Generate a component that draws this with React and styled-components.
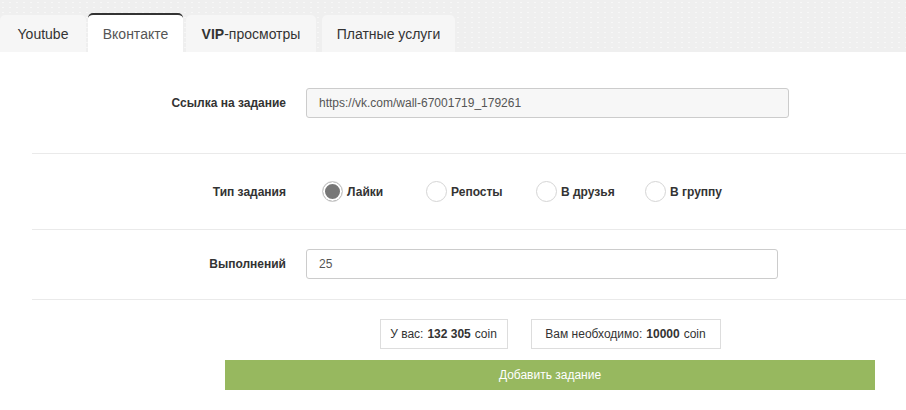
import React from 'react';
import styled, { createGlobalStyle } from 'styled-components';

const GlobalStyle = createGlobalStyle`
  body {
    margin: 0;
    background: #fff;
    font-family: 'Liberation Sans', Arial, sans-serif;
    color: #333;
  }
`;

const tabs = [
  { id: 'yt', label: 'Youtube', width: 86, gap: 2 },
  { id: 'vk', label: 'Вконтакте', width: 95, gap: 3, active: true },
  { id: 'vip', label: 'VIP', rest: '-просмотры', width: 130, gap: 6 },
  { id: 'paid', label: 'Платные услуги', width: 133, gap: 0 },
];

const types = [
  { label: 'Лайки', width: 104, checked: true },
  { label: 'Репосты', width: 110 },
  { label: 'В друзья', width: 109 },
  { label: 'В группу' },
];

export default function App() {
  return (
    <Page>
      <GlobalStyle />
      <TabBar>
        {tabs.map((t) => (
          <Tab key={t.id} $active={t.active} $width={t.width} $gap={t.gap}>
            {t.rest ? (
              <>
                <b>{t.label}</b>
                {t.rest}
              </>
            ) : (
              t.label
            )}
          </Tab>
        ))}
      </TabBar>

      <Form>
        <Row $top={36} $bottom={35}>
          <Label>Ссылка на задание</Label>
          <Input $width={483} $muted readOnly value="https://vk.com/wall-67001719_179261" />
        </Row>
        <Divider />
        <Row $top={27} $bottom={27}>
          <Label>Тип задания</Label>
          <RadioGroup>
            {types.map((r) => (
              <RadioOption key={r.label} $width={r.width}>
                <RadioCircle $checked={r.checked} />
                {r.label}
              </RadioOption>
            ))}
          </RadioGroup>
        </Row>
        <Divider />
        <Row $top={19} $bottom={20}>
          <Label>Выполнений</Label>
          <Input $width={472} readOnly value="25" />
        </Row>
        <Divider />
        <Footer>
          <Balance>
            <InfoBox $width={128}>
              У вас: <b>132 305</b> coin
            </InfoBox>
            <InfoBox $width={190}>
              Вам необходимо: <b>10000</b> coin
            </InfoBox>
          </Balance>
          <SubmitButton>Добавить задание</SubmitButton>
        </Footer>
      </Form>
    </Page>
  );
}

const Page = styled.div`
  width: 906px;
  min-height: 410px;
  background: #fff;
`;

const TabBar = styled.div`
  display: flex;
  align-items: flex-end;
  height: 52px;
  background: #efefef;
  background-image: radial-gradient(rgba(255, 255, 255, 0.5) 1px, transparent 1px);
  background-size: 7px 5px;
`;

const Tab = styled.div`
  display: flex;
  align-items: center;
  justify-content: center;
  box-sizing: border-box;
  width: ${(p) => p.$width}px;
  height: ${(p) => (p.$active ? '39px' : '37px')};
  padding-top: 1px;
  margin-right: ${(p) => p.$gap}px;
  font-size: 14px;
  color: ${(p) => (p.$active ? '#555' : '#333')};
  background: ${(p) => (p.$active ? '#fff' : '#f6f6f6')};
  border-top: ${(p) => (p.$active ? '2px solid #333' : 'none')};
  border-radius: 5px 5px 0 0;

  b {
    font-weight: bold;
  }
`;

const Form = styled.div`
  display: flex;
  flex-direction: column;
`;

const Row = styled.div`
  display: grid;
  grid-template-columns: 286px 1fr;
  column-gap: 20px;
  align-items: center;
  padding: ${(p) => p.$top}px 0 ${(p) => p.$bottom}px;
`;

const Label = styled.div`
  text-align: right;
  font-size: 12px;
  font-weight: bold;
  color: #333;
`;

const Input = styled.input`
  box-sizing: border-box;
  width: ${(p) => p.$width}px;
  height: 30px;
  padding: 0 12px;
  font-family: inherit;
  font-size: 12px;
  color: #555;
  background: ${(p) => (p.$muted ? '#f7f7f7' : '#fff')};
  border: 1px solid #ccc;
  border-radius: 3px;
  outline: none;
`;

const Divider = styled.div`
  height: 1px;
  margin-left: 32px;
  background: #eaeaea;
`;

const RadioGroup = styled.div`
  display: flex;
  align-items: center;
  padding-left: 16px;
`;

const RadioOption = styled.label`
  display: flex;
  align-items: center;
  gap: 4px;
  width: ${(p) => (p.$width ? `${p.$width}px` : 'auto')};
  font-size: 12px;
  font-weight: bold;
  color: #333;
`;

const RadioCircle = styled.span`
  box-sizing: border-box;
  width: 21px;
  height: 21px;
  border-radius: 50%;
  border: 1px solid #d5d5d5;
  background: ${(p) => (p.$checked ? '#777' : '#fff')};
  box-shadow: ${(p) => (p.$checked ? 'inset 0 0 0 2px #fff' : 'none')};
`;

const Footer = styled.div`
  display: flex;
  flex-direction: column;
  align-items: center;
  width: 650px;
  margin-left: 225px;
  padding-top: 19px;
  gap: 11px;
`;

const Balance = styled.div`
  display: flex;
  gap: 23px;
`;

const InfoBox = styled.div`
  box-sizing: border-box;
  width: ${(p) => p.$width}px;
  height: 30px;
  display: flex;
  align-items: center;
  justify-content: center;
  gap: 4px;
  font-size: 12px;
  color: #333;
  border: 1px solid #ddd;

  b {
    font-weight: bold;
  }
`;

const SubmitButton = styled.button`
  width: 100%;
  height: 30px;
  border: none;
  background: #97b85f;
  color: #fff;
  font-family: inherit;
  font-size: 12px;
  cursor: pointer;
`;
